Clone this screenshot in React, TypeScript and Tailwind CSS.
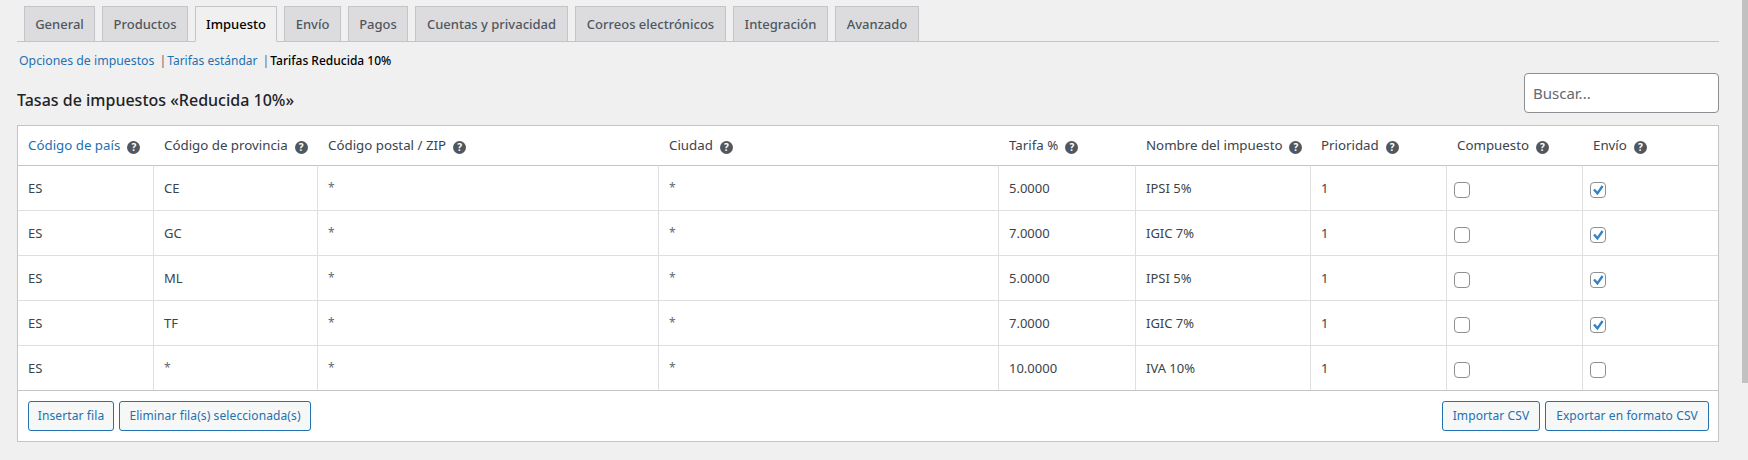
const font = "font-['Noto_Sans','Open_Sans',sans-serif]";

const tabs = [
  { label: "General", w: "w-[71px]" },
  { label: "Productos", w: "w-[86px]" },
  { label: "Impuesto", w: "w-[82px]", active: true },
  { label: "Envío", w: "w-[57px]" },
  { label: "Pagos", w: "w-[60px]" },
  { label: "Cuentas y privacidad", w: "w-[153px]" },
  { label: "Correos electrónicos", w: "w-[151px]" },
  { label: "Integración", w: "w-[95px]" },
  { label: "Avanzado", w: "w-[84px]" },
];

const columns = [
  { label: "Código de país", w: "w-[135px]", link: true },
  { label: "Código de provincia", w: "w-[164px]" },
  { label: "Código postal / ZIP", w: "w-[341px]" },
  { label: "Ciudad", w: "w-[340px]" },
  { label: "Tarifa %", w: "w-[137px]" },
  { label: "Nombre del impuesto", w: "w-[175px]" },
  { label: "Prioridad", w: "w-[136px]" },
  { label: "Compuesto", w: "w-[136px]" },
  { label: "Envío", w: "w-[136px]" },
];

const rows = [
  ["ES", "CE", "*", "*", "5.0000", "IPSI 5%", "1", false, true],
  ["ES", "GC", "*", "*", "7.0000", "IGIC 7%", "1", false, true],
  ["ES", "ML", "*", "*", "5.0000", "IPSI 5%", "1", false, true],
  ["ES", "TF", "*", "*", "7.0000", "IGIC 7%", "1", false, true],
  ["ES", "*", "*", "*", "10.0000", "IVA 10%", "1", false, false],
] as const;

function Help() {
  return (
    <span className="inline-flex ml-[7px] w-[13px] h-[13px] rounded-full bg-[#50575e] text-white text-[10px] leading-[13px] font-bold items-center justify-center align-[-1px]">
      ?
    </span>
  );
}

function Check({ on }: { on: boolean }) {
  return (
    <span className="flex w-[16px] h-[16px] mt-[1px] -ml-[3px] rounded-[4px] border border-[#8c8f94] bg-white items-center justify-center">
      {on && (
        <svg viewBox="0 0 14 14" className="w-[14px] h-[14px] shrink-0">
          <path d="M3 6.5 L6.4 10.4 L11.6 3" fill="none" stroke="#3582c4" strokeWidth="2.4" />
        </svg>
      )}
    </span>
  );
}

function Btn({ children, w }: { children: string; w: string }) {
  return (
    <button className={`h-[30px] ${w} rounded-[3px] border border-[#2271b1] bg-[#f6f7f7] text-[#2271b1] text-[12px] tracking-[0.1px] leading-[28px] text-center`}>
      {children}
    </button>
  );
}

export default function App() {
  return (
    <div className={`relative w-[1748px] h-[460px] overflow-hidden bg-[#f0f0f1] text-[#3c434a] text-[13px] ${font}`}>
      <div className="pl-[17px] pr-[29px]">
        <nav className="flex gap-[7px] pl-[7px] pt-[6px] h-[42px] border-b border-[#c3c4c7]">
          {tabs.map((t) => (
            <div
              key={t.label}
              className={`${t.w} h-[36px] border border-[#c3c4c7] text-center text-[13px] font-medium leading-[34px] ${
                t.active ? "bg-[#f0f0f1] border-b-[#f0f0f1] text-black" : "bg-[#dcdcde] text-[#50575e]"
              }`}
            >
              {t.label}
            </div>
          ))}
        </nav>
        <div className="flex items-center h-[18px] mt-[10px] pl-[2px] text-[12.3px] leading-[18px]">
          <span className="text-[#2271b1]">Opciones de impuestos</span>
          <span className="text-[#646970] ml-[5px] mr-[1px]">|</span>
          <span className="text-[#2271b1] text-[12px]">Tarifas estándar</span>
          <span className="text-[#646970] ml-[5px] mr-[1px]">|</span>
          <span className="text-black font-medium text-[12px]">Tarifas Reducida 10%</span>
        </div>
        <div className="flex items-start justify-between h-[52px] mt-[3px]">
          <h2 className="mt-[15px] text-[16px] leading-[24px] font-medium text-[#1d2327]">Tasas de impuestos «Reducida 10%»</h2>
          <input
            placeholder="Buscar..."
            className="w-[195px] h-[40px] px-[8px] rounded-[4px] border border-[#8c8f94] bg-white text-[15px] placeholder:text-[#646970] outline-none"
          />
        </div>
        <div className="bg-white border border-[#c3c4c7]">
          <table className="w-full table-fixed border-separate border-spacing-0">
            <colgroup>
              {columns.map((c) => (
                <col key={c.label} className={c.w} />
              ))}
            </colgroup>
            <thead>
              <tr className="h-[39px]">
                {columns.map((c, i) => (
                  <th key={c.label} className={`${i === 0 ? "pl-[10px]" : "pl-[11px]"} pr-0 text-left text-[13.3px] font-normal whitespace-nowrap ${c.link ? "text-[#2271b1]" : "text-[#3c434a]"}`}>
                    {c.label}
                    <Help />
                  </th>
                ))}
              </tr>
            </thead>
            <tbody>
              {rows.map((r, i) => (
                <tr key={i} className="h-[45px]">
                  {r.map((v, j) => (
                    <td
                      key={j}
                      className={`px-[10px] border-t border-l first:border-l-0 border-l-[#dfdfdf] ${i === 0 ? "border-t-[#c3c4c7]" : "border-t-[#dfdfdf]"} ${v === "*" ? "text-[#646970] text-[12px]" : "pt-[2px]"}`}
                    >
                      {typeof v === "boolean" ? <Check on={v} /> : v}
                    </td>
                  ))}
                </tr>
              ))}
            </tbody>
          </table>
          <div className="flex justify-between h-[51px] border-t border-[#c3c4c7] pt-[10px] pl-[10px] pr-[9px]">
            <div className="flex gap-[5px]">
              <Btn w="w-[86px]">Insertar fila</Btn>
              <Btn w="w-[192px]">Eliminar fila(s) seleccionada(s)</Btn>
            </div>
            <div className="flex gap-[5px]">
              <Btn w="w-[98px]">Importar CSV</Btn>
              <Btn w="w-[164px]">Exportar en formato CSV</Btn>
            </div>
          </div>
        </div>
      </div>
      <div className="absolute right-0 top-0 w-[6px] h-[383px] bg-[#c1c1c1]" />
    </div>
  );
}
